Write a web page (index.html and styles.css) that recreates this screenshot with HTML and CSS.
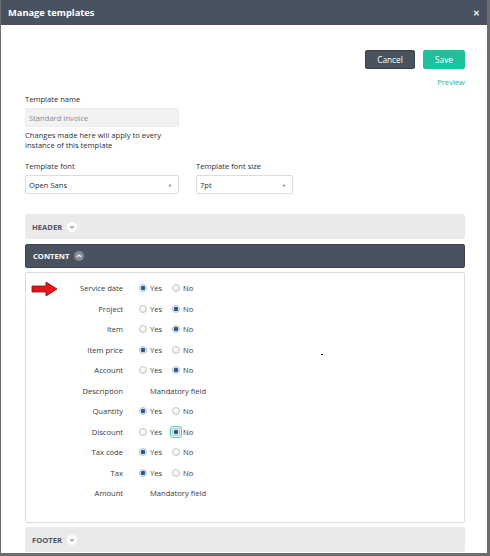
FILE: index.html
```html
<!DOCTYPE html>
<html>
<head>
<meta charset="utf-8">
<link rel="stylesheet" href="styles.css">
</head>
<body>
<div class="dialog">
  <div class="titlebar">
    <span class="title">Manage templates</span>
    <span class="close">&#x2715;</span>
  </div>
  <div class="body">
    <div class="actions">
      <button class="btn cancel">Cancel</button>
      <button class="btn save">Save</button>
    </div>
    <div class="preview-row"><span class="preview">Preview</span></div>
    <div class="field">
      <div class="label">Template name</div>
      <div class="input disabled">Standard Invoice</div>
      <div class="help">Changes made here will apply to every<br>instance of this template</div>
    </div>
    <div class="selects">
      <div class="field">
        <div class="label">Template font</div>
        <div class="input select wide">Open Sans<span class="caret">&#9660;</span></div>
      </div>
      <div class="field">
        <div class="label">Template font size</div>
        <div class="input select narrow">7pt<span class="caret">&#9660;</span></div>
      </div>
    </div>

    <div class="section light first">HEADER <span class="chev light-chev"><svg viewBox="0 0 10 10" width="10" height="10"><path d="M3 4.2 L5 6 L7 4.2" fill="none" stroke="#8a9198" stroke-width="1.1"/></svg></span></div>
    <div class="section dark">CONTENT <span class="chev dark-chev"><svg viewBox="0 0 10 10" width="10" height="10"><path d="M3 5.8 L5 4 L7 5.8" fill="none" stroke="#ffffff" stroke-width="1.3"/></svg></span></div>
    <div class="panel">
      <svg class="arrow" viewBox="0 0 27 16" width="27" height="16"><path d="M1 5 H15 V1 L26 8 L15 15 V11 H1 Z" fill="#e8141b" stroke="#8c0a0e" stroke-width="0.8"/></svg>
      <span class="dot"></span>
      <div class="row"><span class="rl">Service date</span><span class="opt yes"><i class="radio on"></i>Yes</span><span class="opt"><i class="radio"></i>No</span></div>
      <div class="row"><span class="rl">Project</span><span class="opt yes"><i class="radio"></i>Yes</span><span class="opt"><i class="radio on"></i>No</span></div>
      <div class="row"><span class="rl">Item</span><span class="opt yes"><i class="radio"></i>Yes</span><span class="opt"><i class="radio on"></i>No</span></div>
      <div class="row"><span class="rl">Item price</span><span class="opt yes"><i class="radio on"></i>Yes</span><span class="opt"><i class="radio"></i>No</span></div>
      <div class="row"><span class="rl">Account</span><span class="opt yes"><i class="radio"></i>Yes</span><span class="opt"><i class="radio on"></i>No</span></div>
      <div class="row"><span class="rl">Description</span><span class="mand">Mandatory field</span></div>
      <div class="row"><span class="rl">Quantity</span><span class="opt yes"><i class="radio on"></i>Yes</span><span class="opt"><i class="radio"></i>No</span></div>
      <div class="row"><span class="rl">Discount</span><span class="opt yes"><i class="radio"></i>Yes</span><span class="opt"><i class="radio on focus"></i>No</span></div>
      <div class="row"><span class="rl">Tax code</span><span class="opt yes"><i class="radio on"></i>Yes</span><span class="opt"><i class="radio"></i>No</span></div>
      <div class="row"><span class="rl">Tax</span><span class="opt yes"><i class="radio on"></i>Yes</span><span class="opt"><i class="radio"></i>No</span></div>
      <div class="row"><span class="rl">Amount</span><span class="mand">Mandatory field</span></div>
    </div>
    <div class="section light">FOOTER <span class="chev light-chev"><svg viewBox="0 0 10 10" width="10" height="10"><path d="M3 4.2 L5 6 L7 4.2" fill="none" stroke="#8a9198" stroke-width="1.1"/></svg></span></div>
  </div>
</div>
</body>
</html>
```
FILE: styles.css
```css
html, body {
  margin: 0;
  padding: 0;
}
body {
  width: 490px;
  height: 556px;
  background: #6d6d6d;
  font-family: "Open Sans", "Noto Sans", sans-serif;
  color: #333333;
  overflow: hidden;
}
.dialog {
  width: 486px;
  height: 553px;
  margin-left: 1px;
  background: #ffffff;
  overflow: hidden;
}
.titlebar {
  height: 25px;
  background: #48535f;
  display: flex;
  align-items: center;
  justify-content: space-between;
  padding: 0 7px 0 7px;
  color: #ffffff;
}
.title {
  font-size: 9.3px;
  font-weight: 700;
}
.close {
  font-size: 8px;
  font-weight: 700;
}
.body {
  padding: 25px 22px 0 24px;
}
.actions {
  display: flex;
  justify-content: flex-end;
  gap: 8px;
}
.btn {
  box-sizing: border-box;
  height: 19px;
  border: none;
  border-radius: 2px;
  color: #ffffff;
  font-family: "Open Sans", sans-serif;
  font-size: 8.3px;
  padding: 0;
}
.cancel {
  width: 50px;
  background: #47525d;
  border: 1px solid #39434c;
}
.save {
  width: 42px;
  background: #1fc09c;
}
.preview-row {
  display: flex;
  justify-content: flex-end;
  margin-top: 8px;
  height: 12px;
}
.preview {
  color: #2bb59a;
  font-size: 7.6px;
}
.field {
  display: flex;
  flex-direction: column;
}
.label {
  font-size: 7.6px;
  color: #2e2e2e;
  height: 11px;
  line-height: 11px;
  margin-top: 5px;
  margin-bottom: 3px;
}
.input {
  box-sizing: border-box;
  height: 19px;
  width: 154px;
  border: 1px solid #dcdcdc;
  border-radius: 2px;
  font-size: 7.6px;
  padding-left: 3px;
  display: flex;
  align-items: center;
  color: #2e2e2e;
  position: relative;
}
.disabled {
  background: #f2f2f2;
  border-color: #ececec;
  color: #8a8a8a;
}
.help {
  font-size: 7.6px;
  line-height: 10px;
  margin-top: 3px;
  color: #2e2e2e;
}
.selects {
  display: flex;
  gap: 17px;
  margin-top: 6px;
}
.select.narrow {
  width: 97px;
}
.caret {
  position: absolute;
  right: 6px;
  top: 7px;
  font-size: 4px;
  color: #666;
}
.section {
  box-sizing: border-box;
  height: 25px;
  display: flex;
  align-items: center;
  padding-left: 7px;
  font-size: 7.6px;
  font-weight: 700;
  border-radius: 2px;
  gap: 5px;
}
.section.light {
  background: #e9eaeb;
  color: #4e5760;
}
.section.first {
  margin-top: 20px;
}
.section.dark {
  background: #48535f;
  color: #ffffff;
  margin-top: 5px;
  height: 24px;
  border: 1px solid #3b454f;
}
.chev {
  width: 10px;
  height: 10px;
  border-radius: 50%;
  display: flex;
}
.light-chev {
  background: #ffffff;
}
.dark-chev {
  background: #848d96;
}
.panel {
  position: relative;
  box-sizing: border-box;
  height: 251px;
  margin-top: 4px;
  margin-bottom: 4px;
  border: 1px solid #dddddd;
  border-radius: 2px;
  padding-top: 5px;
}
.arrow {
  position: absolute;
  left: 5px;
  top: 8px;
}
.dot {
  position: absolute;
  left: 295px;
  top: 81px;
  width: 2px;
  height: 1px;
  background: #111;
}
.row {
  height: 20.5px;
  display: flex;
  align-items: center;
  font-size: 7.6px;
  color: #3a3a3a;
}
.rl {
  width: 97px;
  text-align: right;
  flex: none;
}
.opt {
  display: flex;
  align-items: center;
  width: 33px;
}
.opt.yes {
  margin-left: 16px;
}
.mand {
  margin-left: 27px;
}
.radio {
  box-sizing: border-box;
  width: 8px;
  height: 8px;
  border-radius: 50%;
  border: 1px solid #c6c6c6;
  background: radial-gradient(circle at 40% 35%, #ffffff 0%, #e6e6e6 100%);
  margin-right: 3px;
  position: relative;
  flex: none;
}
.radio.on {
  border-color: #b9c3ca;
  background: radial-gradient(circle, #1b5f96 0, #1b5f96 2px, #dfe6ec 2.5px, #f4f6f8 100%);
}
.radio.focus {
  outline: 1px solid #49c9b0;
  outline-offset: 1px;
  border-radius: 1px;
}
```
